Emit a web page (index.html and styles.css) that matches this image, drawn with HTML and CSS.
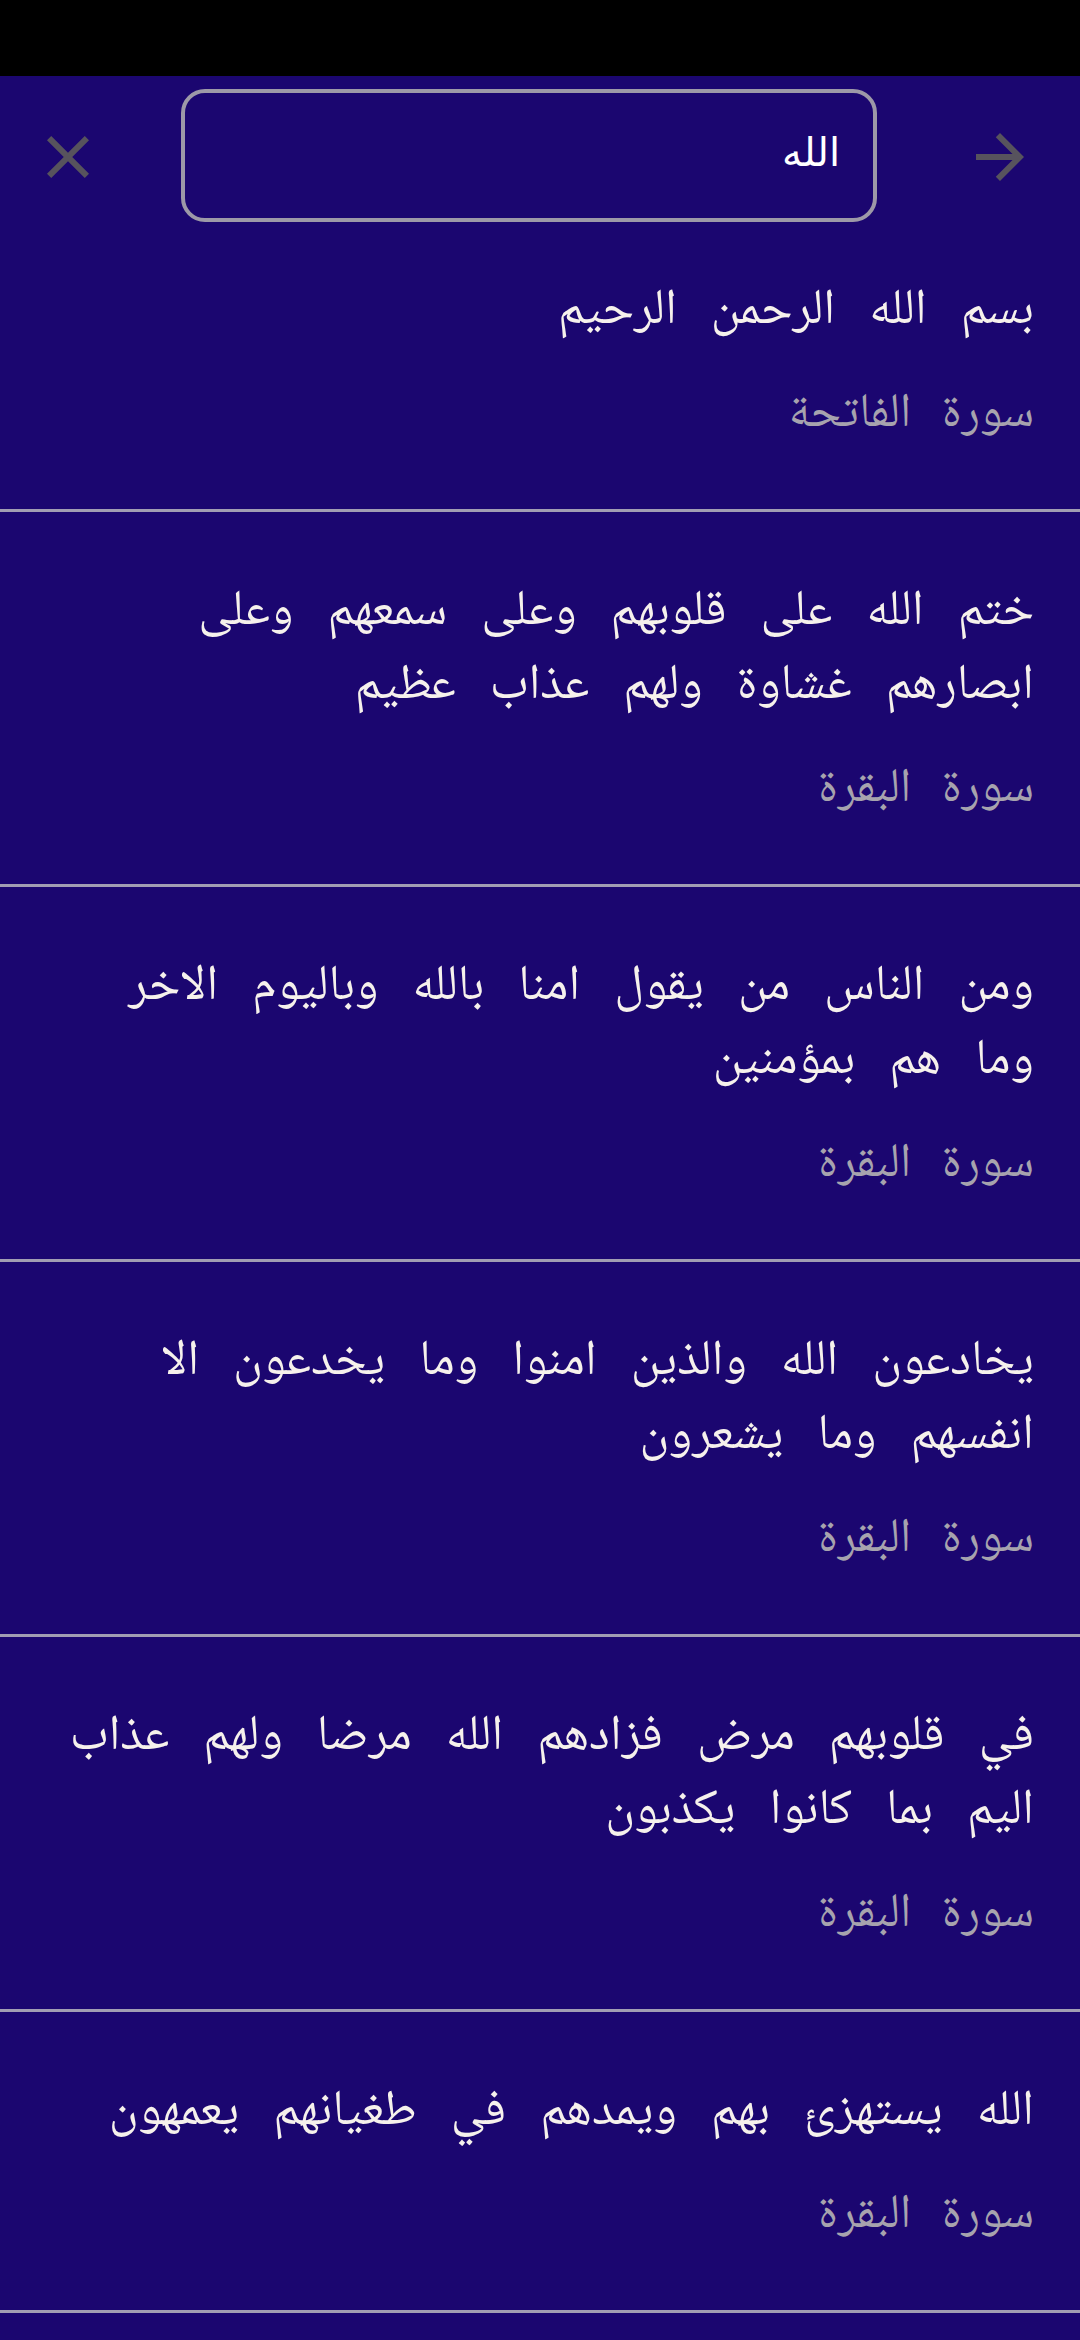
FILE: index.html
```html
<!DOCTYPE html>
<html lang="ar">
<head>
<meta charset="utf-8">
<title>بحث</title>
<link rel="stylesheet" href="styles.css">
</head>
<body>
<div class="statusbar"></div>
<header class="toolbar">
  <button class="icon-btn close" aria-label="إغلاق">
    <svg viewBox="0 0 24 24" width="72" height="72"><path d="M19 6.41L17.59 5 12 10.59 6.41 5 5 6.41 10.59 12 5 17.59 6.41 19 12 13.41 17.59 19 19 17.59 13.41 12z"/></svg>
  </button>
  <div class="search-box" dir="rtl"><span class="query">الله</span></div>
  <button class="icon-btn go" aria-label="بحث">
    <svg viewBox="0 0 24 24" width="72" height="72"><path d="M12 4l-1.41 1.41L16.17 11H4v2h12.17l-5.58 5.59L12 20l8-8z"/></svg>
  </button>
</header>
<main class="results" dir="rtl">
  <article class="item first">
    <p class="verse">بسم الله الرحمن الرحيم</p>
    <p class="surah">سورة الفاتحة</p>
  </article>
  <article class="item">
    <p class="verse">ختم الله على قلوبهم وعلى سمعهم وعلى<br>ابصارهم غشاوة ولهم عذاب عظيم</p>
    <p class="surah">سورة البقرة</p>
  </article>
  <article class="item">
    <p class="verse">ومن الناس من يقول امنا بالله وباليوم الاخر<br>وما هم بمؤمنين</p>
    <p class="surah">سورة البقرة</p>
  </article>
  <article class="item">
    <p class="verse">يخادعون الله والذين امنوا وما يخدعون الا<br>انفسهم وما يشعرون</p>
    <p class="surah">سورة البقرة</p>
  </article>
  <article class="item">
    <p class="verse">في قلوبهم مرض فزادهم الله مرضا ولهم عذاب<br>اليم بما كانوا يكذبون</p>
    <p class="surah">سورة البقرة</p>
  </article>
  <article class="item">
    <p class="verse">الله يستهزئ بهم ويمدهم في طغيانهم يعمهون</p>
    <p class="surah">سورة البقرة</p>
  </article>
</main>
</body>
</html>
```
FILE: styles.css
```css
html, body {
  margin: 0;
  padding: 0;
  background: #1b0670;
  height: 2340px;
  overflow: hidden;
}
body {
  font-family: "Noto Naskh Arabic", "DejaVu Sans", serif;
}
.statusbar {
  height: 76px;
  background: #000;
}
.toolbar {
  height: 147px;
  display: flex;
  align-items: flex-start;
  padding: 0 44px 0 32px;
  box-sizing: border-box;
}
.icon-btn {
  width: 72px;
  height: 72px;
  margin-top: 45px;
  padding: 0;
  border: 0;
  background: none;
  fill: #57535d;
  display: flex;
}
.search-box {
  box-sizing: border-box;
  width: 696px;
  height: 133px;
  margin: 13px 87px 0 77px;
  border: 4px solid #9d99a8;
  border-radius: 24px;
  display: flex;
  align-items: center;
  padding: 0 33px 8px;
}
.query {
  font-family: "DejaVu Sans", sans-serif;
  font-size: 40px;
  color: #ffffff;
}
.results {
  display: flex;
  flex-direction: column;
}
.item {
  padding: 65px 46px 63px 16px;
  border-bottom: 3px solid #a19db3;
}
.item.first {
  padding-top: 53px;
}
.verse {
  margin: 0;
  font-size: 50px;
  line-height: 74px;
  word-spacing: 23px;
  white-space: nowrap;
  color: #f6f1ec;
}
.surah {
  margin: 36px 0 0;
  font-size: 48px;
  line-height: 60px;
  word-spacing: 20px;
  color: #a7a3ae;
}
```
